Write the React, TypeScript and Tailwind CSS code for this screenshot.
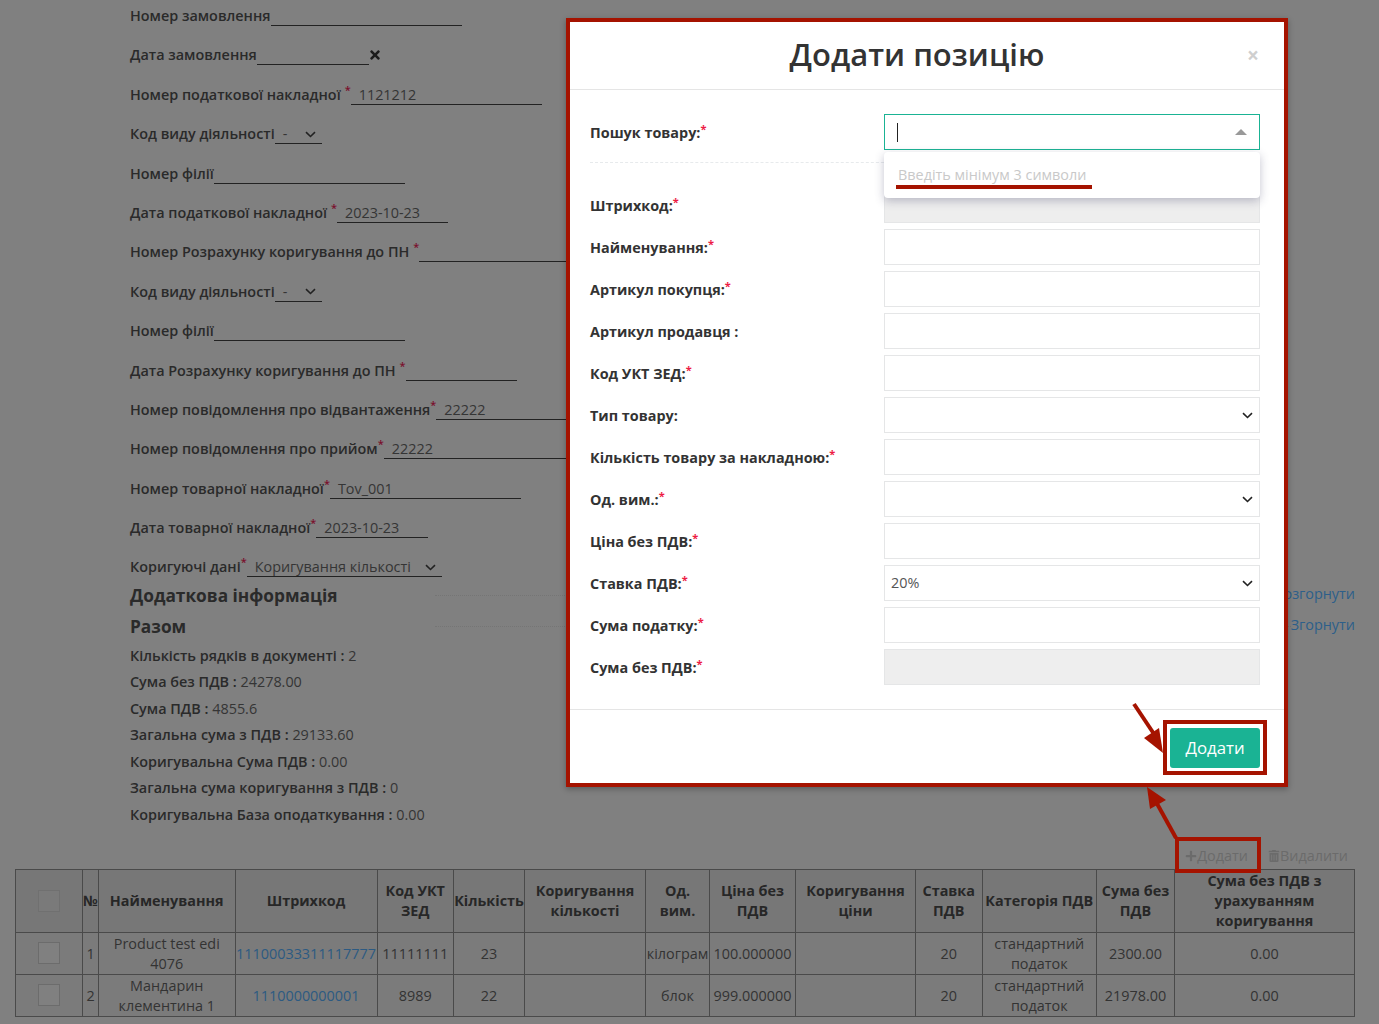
import React from "react";
import { FaPlus, FaTimes, FaTrashAlt } from "react-icons/fa";

const font = "font-['Open_Sans',sans-serif]";

const Chevron = ({ className }: { className?: string }) => (
  <svg width="11" height="7" viewBox="0 0 11 7" fill="none" className={className}>
    <path d="M1 1.2L5.5 5.5L10 1.2" stroke="currentColor" strokeWidth="1.6" />
  </svg>
);

const Req = ({ gap }: { gap?: boolean }) => (
  <sup className={`relative -top-[6px] text-[11px] leading-none text-[#7a0f2c] ${gap ? "ml-[4px]" : ""}`}>*</sup>
);

type FormRow = {
  label: string;
  req?: "gap" | "tight";
  value?: string;
  width: number;
  kind?: "select" | "clear";
};

const formRows: FormRow[] = [
  { label: "Номер замовлення", width: 191 },
  { label: "Дата замовлення", width: 112, kind: "clear" },
  { label: "Номер податкової накладної", req: "gap", value: "1121212", width: 191 },
  { label: "Код виду діяльності", value: "-", width: 47, kind: "select" },
  { label: "Номер філії", width: 191 },
  { label: "Дата податкової накладної", req: "gap", value: "2023-10-23", width: 111 },
  { label: "Номер Розрахунку коригування до ПН", req: "gap", width: 191 },
  { label: "Код виду діяльності", value: "-", width: 47, kind: "select" },
  { label: "Номер філії", width: 191 },
  { label: "Дата Розрахунку коригування до ПН", req: "gap", width: 111 },
  { label: "Номер повідомлення про відвантаження", req: "tight", value: "22222", width: 191 },
  { label: "Номер повідомлення про прийом", req: "tight", value: "22222", width: 191 },
  { label: "Номер товарної накладної", req: "tight", value: "Tov_001", width: 191 },
  { label: "Дата товарної накладної", req: "tight", value: "2023-10-23", width: 112 },
  { label: "Коригуючі дані", req: "tight", value: "Коригування кількості", width: 195, kind: "select" },
];

const widthClass: Record<number, string> = {
  47: "w-[47px]",
  111: "w-[111px]",
  112: "w-[112px]",
  191: "w-[191px]",
  195: "w-[195px]",
};

const totals = [
  ["Кількість рядків в документі :", "2"],
  ["Сума без ПДВ :", "24278.00"],
  ["Сума ПДВ :", "4855.6"],
  ["Загальна сума з ПДВ :", "29133.60"],
  ["Коригувальна Сума ПДВ :", "0.00"],
  ["Загальна сума коригування з ПДВ :", "0"],
  ["Коригувальна База оподаткування :", "0.00"],
];

const colWidths = [67, 16, 136.5, 142, 76.5, 71, 121, 64, 86, 120, 66.5, 114.5, 78, 180];

const headers = [
  "№",
  "Найменування",
  "Штрихкод",
  "Код УКТ ЗЕД",
  "Кількість",
  "Коригування кількості",
  "Од. вим.",
  "Ціна без ПДВ",
  "Коригування ціни",
  "Ставка ПДВ",
  "Категорія ПДВ",
  "Сума без ПДВ",
  "Сума без ПДВ з урахуванням коригування",
];

const rows = [
  ["1", "Product test edi 4076", "11100033311117777", "11111111", "23", "", "кілограм", "100.000000", "", "20", "стандартний податок", "2300.00", "0.00"],
  ["2", "Мандарин клементина 1", "1110000000001", "8989", "22", "", "блок", "999.000000", "", "20", "стандартний податок", "21978.00", "0.00"],
];

type ModalField = { label: string; req?: boolean; kind?: "disabled" | "select"; value?: string };

const modalFields: ModalField[] = [
  { label: "Штрихкод:", req: true, kind: "disabled" },
  { label: "Найменування:", req: true },
  { label: "Артикул покупця:", req: true },
  { label: "Артикул продавця :" },
  { label: "Код УКТ ЗЕД:", req: true },
  { label: "Тип товару:", kind: "select" },
  { label: "Кількість товару за накладною:", req: true },
  { label: "Од. вим.:", req: true, kind: "select" },
  { label: "Ціна без ПДВ:", req: true },
  { label: "Ставка ПДВ:", req: true, kind: "select", value: "20%" },
  { label: "Сума податку:", req: true },
  { label: "Сума без ПДВ:", req: true, kind: "disabled" },
];

const ModalStar = () => (
  <sup className="relative -top-[5px] text-[11px] font-bold leading-none text-[#ed1c45]">*</sup>
);

const Modal = () => (
  <div className="absolute left-[566px] top-[18px] z-10 flex h-[769px] w-[722px] flex-col border-4 border-[#a51300] bg-white shadow-[0_2px_6px_rgba(0,0,0,0.3)]">
    <div className="relative flex h-[68px] shrink-0 items-center justify-center border-b border-[#e5e5e5] pb-[2px] pr-[20px]">
      <h2 className="text-[31px] font-semibold leading-none text-[#333]">Додати позицію</h2>
      <span className="absolute right-[25px] top-[21px] text-[21px] font-bold leading-[24px] text-[#cfcfcf]">×</span>
    </div>

    <div className="flex flex-col pb-[24px] pl-[20px] pr-[24px] pt-[24px]">
      <div className="flex h-[36px] items-center">
        <label className="w-[294px] shrink-0 pt-[2px] font-bold text-[#333]">
          Пошук товару:<ModalStar />
        </label>
        <div className="flex h-[36px] flex-1 items-center justify-between border border-[#1ab394] pl-[12px] pr-[12px]">
          <span className="h-[19px] w-px bg-[#222]" />
          <span className="h-0 w-0 border-x-[6px] border-b-[6px] border-x-transparent border-b-[#999]" />
        </div>
      </div>
      <div className="mb-[24px] mt-[12px] border-b border-dashed border-[#e7eaec]" />

      <div className="flex flex-col gap-[6px]">
        {modalFields.map((f) => (
          <div key={f.label} className="flex h-[36px] items-center">
            <label className="w-[294px] shrink-0 pt-[2px] font-bold text-[#333]">
              {f.label}
              {f.req && <ModalStar />}
            </label>
            <div
              className={`flex h-[36px] flex-1 items-center justify-between border border-[#e5e6e7] pb-[1px] pl-[6px] pr-[6px] text-[#555] ${
                f.kind === "disabled" ? "bg-[#eeeeee]" : "bg-white"
              }`}
            >
              <span>{f.value}</span>
              {f.kind === "select" && <Chevron className="mt-[2px] text-[#222]" />}
            </div>
          </div>
        ))}
      </div>
    </div>

    <div className="flex flex-1 items-start justify-end border-t border-[#e5e5e5] pr-[24px] pt-[18px]">
      <button className="h-[40px] w-[90px] rounded-[3px] bg-[#1ab394] text-[16.8px] text-white">Додати</button>
    </div>

    {/* Dropdown of the search field */}
    <div className="absolute left-[314px] top-[130px] flex h-[46px] w-[376px] items-center rounded-[4px] bg-white pb-[1px] pl-[14px] text-[#c9c9c9] shadow-[0_3px_10px_rgba(60,60,100,0.3)]">
      Введіть мінімум 3 символи
    </div>
  </div>
);

const Annotations = () => (
  <>
    <div className="absolute left-[896px] top-[185px] z-20 h-[4px] w-[196px] bg-[#a51300]" />
    <div className="absolute left-[1163px] top-[720px] z-20 h-[55px] w-[104px] border-4 border-[#a51300]" />
    <div className="absolute left-[1175px] top-[837px] z-20 h-[36px] w-[86px] border-4 border-[#a51300]" />
    <svg className="absolute left-[1120px] top-[695px] z-20" width="70" height="150" viewBox="0 0 70 150" fill="none">
      <path d="M14 9L34 39" stroke="#a51300" strokeWidth="4" />
      <path d="M43 58L24 43L39 33Z" fill="#a51300" />
      <path d="M56 143L35 105" stroke="#a51300" strokeWidth="4" />
      <path d="M27 92L30 114L46 105Z" fill="#a51300" />
    </svg>
  </>
);

export default function App() {
  return (
    <div className={`${font} relative h-[1024px] w-full overflow-hidden bg-[#808080] text-[14.4px] text-[#2a2a2a]`}>
      <div className="pl-[130px]">
        {formRows.map((r, i) => (
          <div key={i} className={`flex items-end ${i === 0 ? "h-[26px]" : "h-[39.4px]"}`}>
            <span className="whitespace-nowrap font-semibold leading-[20px]">
              {r.label}
              {r.req && <Req gap={r.req === "gap"} />}
            </span>
            <div
              className={`${widthClass[r.width]} ${r.kind === "select" ? "pr-[6px]" : "pr-[10px]"} flex h-[20px] shrink-0 items-center justify-between border-b border-[#222] pl-[8px] pt-[1px] leading-[20px] text-[#353535]`}
            >
              <span className="whitespace-nowrap">{r.value}</span>
              {r.kind === "select" && <Chevron className="shrink-0 text-[#222]" />}
            </div>
            {r.kind === "clear" && (
              <span className="-ml-[1px] flex h-[20px] items-center">
                <FaTimes size={14} className="text-[#1c1c1c]" />
              </span>
            )}
          </div>
        ))}
      </div>

      <div className="pr-[24px] pt-[3px]">
        <div className="flex h-[31px] items-center pl-[130px]">
          <h3 className="w-[305px] shrink-0 text-[17.3px] font-bold leading-none">Додаткова інформація</h3>
          <div className="flex-1 border-b border-dotted border-[#757575]" />
          <a className="mb-[4px] text-[#2d5f8a]">Розгорнути</a>
        </div>
        <div className="flex h-[31px] items-center pl-[130px]">
          <h3 className="w-[305px] shrink-0 text-[17.3px] font-bold leading-none">Разом</h3>
          <div className="flex-1 border-b border-dotted border-[#757575]" />
          <a className="mb-[4px] text-[#2d5f8a]">Згорнути</a>
        </div>
      </div>

      <div className="pl-[130px] pt-[0.2px]">
        {totals.map(([k, v]) => (
          <div key={k} className="h-[26.5px] leading-[26.5px]">
            <span className="font-semibold">{k}</span> <span className="text-[#353535]">{v}</span>
          </div>
        ))}
      </div>

      <div className="mt-[14.7px] flex h-[26px] items-center justify-end gap-[20px] pr-[31px] text-[#6b6b6b]">
        <span className="flex items-center">
          <FaPlus size={12} />
          Додати
        </span>
        <span className="flex items-center">
          <FaTrashAlt size={12} />
          Видалити
        </span>
      </div>

      <table className="ml-[15px] w-[1340px] table-fixed border-collapse border border-[#4a4a4a] text-center">
        <colgroup>
          {colWidths.map((w, i) => (
            <col key={i} style={{ width: w }} />
          ))}
        </colgroup>
        <thead>
          <tr className="h-[63px] bg-[#777777]">
            <th className="border border-[#4a4a4a]">
              <span className="mx-auto block h-[22px] w-[22px] border border-[#707070] bg-[#7a7a7a]" />
            </th>
            {headers.map((h) => (
              <th key={h} className="border border-[#4a4a4a] p-0 pt-[1px] font-bold leading-[20.3px] text-[#272727]">
                {h}
              </th>
            ))}
          </tr>
        </thead>
        <tbody>
          {rows.map((row) => (
            <tr key={row[0]} className="h-[42px] bg-[#7b7b7b]">
              <td className="border border-[#4a4a4a]">
                <span className="mx-auto block h-[22px] w-[22px] border border-[#6c6c6c] bg-[#808080]" />
              </td>
              {row.map((c, i) => (
                <td key={i} className={`border border-[#4a4a4a] p-0 pt-[1px] leading-[20px] ${i === 2 ? "text-[#2c5a82]" : "text-[#333]"}`}>
                  {c}
                </td>
              ))}
            </tr>
          ))}
        </tbody>
      </table>

      <Modal />
      <Annotations />
    </div>
  );
}
